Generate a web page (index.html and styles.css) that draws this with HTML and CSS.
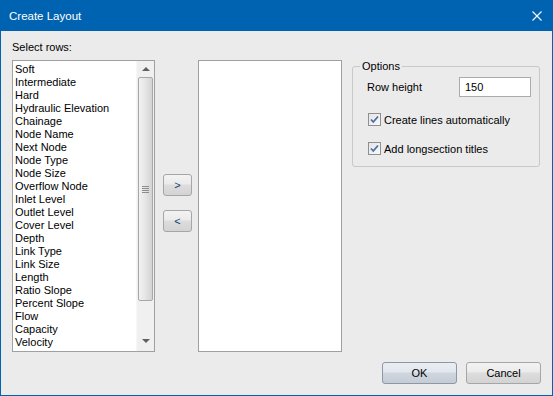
FILE: index.html
```html
<!DOCTYPE html>
<html lang="en">
<head>
  <meta charset="UTF-8">
  <title>Create Layout</title>
  <link rel="stylesheet" href="styles.css">
</head>
<body>
  <div class="window">
    <div class="titlebar">
      <span class="title">Create Layout</span>
      <svg class="close" width="10" height="10" viewBox="0 0 10 10">
        <path d="M0.5 0.5 L9.5 9.5 M9.5 0.5 L0.5 9.5" stroke="#fff" stroke-width="1.1" fill="none"/>
      </svg>
    </div>

    <div class="content">
      <div class="main">
        <div class="caption">Select rows:</div>

        <div class="listbox rows">
          <ul class="items">
            <li>Soft</li>
            <li>Intermediate</li>
            <li>Hard</li>
            <li>Hydraulic Elevation</li>
            <li>Chainage</li>
            <li>Node Name</li>
            <li>Next Node</li>
            <li>Node Type</li>
            <li>Node Size</li>
            <li>Overflow Node</li>
            <li>Inlet Level</li>
            <li>Outlet Level</li>
            <li>Cover Level</li>
            <li>Depth</li>
            <li>Link Type</li>
            <li>Link Size</li>
            <li>Length</li>
            <li>Ratio Slope</li>
            <li>Percent Slope</li>
            <li>Flow</li>
            <li>Capacity</li>
            <li>Velocity</li>
            <li>Width</li>
          </ul>
          <div class="scrollbar">
            <div class="arrow up"></div>
            <div class="thumb"><span class="grip"></span></div>
            <div class="arrow down"></div>
          </div>
        </div>

        <div class="movers">
          <button class="btn small">&gt;</button>
          <button class="btn small">&lt;</button>
        </div>

        <div class="listbox selected"></div>

        <fieldset class="options">
          <legend>Options</legend>
          <div class="field">
            <label>Row height</label>
            <div class="textbox">150</div>
          </div>
          <div class="checkrow">
            <span class="check">
              <svg width="11" height="11" viewBox="0 0 11 11">
                <path d="M2 5.5 L4.3 8 L9 2.5" stroke="#4a6ea8" stroke-width="1.8" fill="none"/>
              </svg>
            </span>
            Create lines automatically
          </div>
          <div class="checkrow">
            <span class="check">
              <svg width="11" height="11" viewBox="0 0 11 11">
                <path d="M2 5.5 L4.3 8 L9 2.5" stroke="#4a6ea8" stroke-width="1.8" fill="none"/>
              </svg>
            </span>
            Add longsection titles
          </div>
        </fieldset>
      </div>

      <div class="footer">
        <button class="btn wide default">OK</button>
        <button class="btn wide">Cancel</button>
      </div>
    </div>
  </div>
</body>
</html>
```

FILE: styles.css
```css
body {
  margin: 0;
  font-family: 'Liberation Sans', Arial, sans-serif;
  font-size: 11px;
  color: #000;
  background-color: #ebebeb;
}

.window {
  width: 553px;
  height: 396px;
  box-sizing: border-box;
  border: 1px solid #0063b1;
  background-color: #ebebeb;
}

.titlebar {
  height: 30px;
  background-color: #0063b1;
  display: flex;
  align-items: center;
  justify-content: space-between;
  padding: 0 10px 0 8px;
}

.title {
  color: #fff;
  font-size: 11.5px;
}

.close {
  margin-top: -1px;
}

.content {
  height: 364px;
  box-sizing: border-box;
  padding: 10px 11px 0 11px;
  display: flex;
  flex-direction: column;
}

.main {
  display: grid;
  grid-template-columns: 143px 29px 144px 188px;
  grid-template-rows: 19px 292px;
  column-gap: 8px;
}

.caption {
  grid-column: 1;
  grid-row: 1;
  line-height: 13px;
}

.listbox {
  grid-row: 2;
  box-sizing: border-box;
  border: 1px solid #a0a0a0;
  background-color: #fff;
}

.rows {
  grid-column: 1;
  display: flex;
  overflow: hidden;
}

.items {
  flex: 1;
  list-style: none;
  margin: 0;
  padding: 2px 0 0 2px;
  overflow: hidden;
}

.items li {
  line-height: 13px;
  height: 13px;
  white-space: nowrap;
}

.scrollbar {
  width: 17px;
  background-color: #f0f0f0;
  border-left: 1px solid #f7f7f7;
  display: flex;
  flex-direction: column;
  align-items: center;
}

.arrow {
  width: 0;
  height: 0;
  border-left: 4px solid transparent;
  border-right: 4px solid transparent;
}

.arrow.up {
  margin: 6px 0 6px;
  border-bottom: 4px solid #606060;
}

.arrow.down {
  margin: 38px 0 6px;
  border-top: 4px solid #606060;
}

.thumb {
  width: 15px;
  height: 224px;
  box-sizing: border-box;
  border: 1px solid #a7a7a7;
  border-radius: 2px;
  background: linear-gradient(to right, #f2f2f2, #e6e6e6 45%, #d3d3d3);
  display: flex;
  align-items: center;
  justify-content: center;
}

.grip {
  width: 7px;
  height: 5px;
  border-top: 1px solid #8c8c8c;
  border-bottom: 1px solid #8c8c8c;
  background: linear-gradient(to bottom, transparent 1px, #8c8c8c 1px, #8c8c8c 2px, transparent 2px, transparent 3px, #8c8c8c 3px, #8c8c8c 4px, transparent 4px);
}

.movers {
  grid-column: 2;
  grid-row: 2;
  display: flex;
  flex-direction: column;
  gap: 14px;
  padding-top: 114px;
}

.selected {
  grid-column: 3;
  width: 144px;
  justify-self: start;
  margin-left: -2px;
}

.btn {
  font-family: 'Liberation Sans', Arial, sans-serif;
  font-size: 11px;
  color: #000;
  box-sizing: border-box;
  border: 1px solid #a6a6a6;
  border-radius: 3px;
  background: linear-gradient(to bottom, #f3f3f3 0%, #ebebeb 45%, #dddddd 50%, #d3d3d3 100%);
  padding: 0;
  height: 22px;
}

.small {
  width: 29px;
  color: #1c3d6e;
}

.wide {
  width: 75px;
}

.default {
  border-color: #8b98aa;
  background: linear-gradient(to bottom, #e9eef4 0%, #e2e7ee 45%, #cfd6df 50%, #c6ccd4 100%);
}

.options {
  grid-column: 4;
  grid-row: 2;
  align-self: start;
  margin: 0;
  height: 107px;
  box-sizing: border-box;
  border: 1px solid #c8c8c8;
  border-radius: 3px;
  padding: 0 8px 0 14px;
}

.options legend {
  padding: 0 2px;
  margin-left: -7px;
  line-height: 13px;
}

.field {
  display: flex;
  align-items: center;
  justify-content: space-between;
  margin-top: 4px;
  height: 20px;
}

.textbox {
  width: 72px;
  height: 20px;
  box-sizing: border-box;
  border: 1px solid #ababab;
  background-color: #fff;
  padding: 3px 0 0 5px;
  line-height: 13px;
}

.checkrow {
  display: flex;
  align-items: center;
  gap: 3px;
  height: 13px;
  margin-top: 16px;
  margin-left: 1px;
}

.check {
  width: 13px;
  height: 13px;
  box-sizing: border-box;
  border: 1px solid #8f8f8f;
  background: linear-gradient(to bottom right, #e4e4e4, #f9f9f9);
  display: flex;
  align-items: center;
  justify-content: center;
}

.footer {
  display: flex;
  justify-content: flex-end;
  gap: 9px;
  margin-top: 10px;
}
```
